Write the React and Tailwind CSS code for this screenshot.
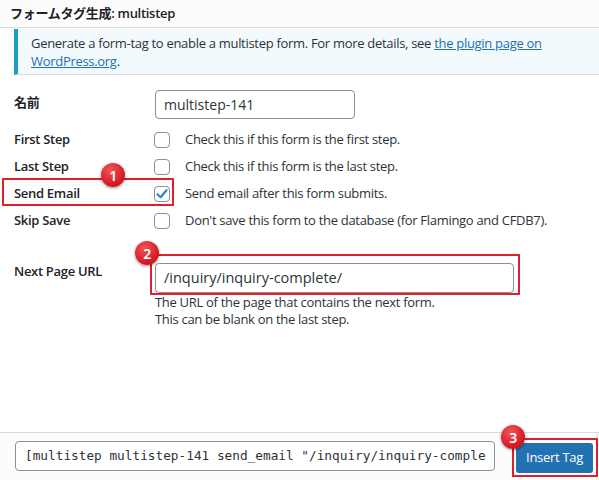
import React from "react";

function Badge({ n, className }) {
  return (
    <div
      className={`absolute w-[24px] h-[24px] rounded-full flex items-center justify-center text-white text-[14px] font-semibold shadow-[0_1px_3px_rgba(0,0,0,0.45)] bg-[radial-gradient(circle_at_40%_30%,#f0545a,#d3161f_70%)] ${className}`}
      style={{ fontFamily: '"Noto Sans", sans-serif' }}
    >
      {n}
    </div>
  );
}

function Box({ checked }) {
  return (
    <div className="w-[16px] h-[16px] rounded-[4px] border border-[#8c8f94] bg-white flex items-center justify-center shrink-0">
      {checked && (
        <svg width="14" height="14" viewBox="0 0 14 14">
          <path d="M2.5 7.2 L5.6 10.2 L11.5 3.2" fill="none" stroke="#3582c4" strokeWidth="2.2" strokeLinecap="round" strokeLinejoin="round" />
        </svg>
      )}
    </div>
  );
}

function CheckRow({ label, desc, checked }) {
  return (
    <div className="flex items-center h-[27px]">
      <div className="w-[154px] pl-[14px] text-[13px] font-semibold text-[#1d2327]">{label}</div>
      <Box checked={checked} />
      <div className="pl-[15px] text-[13px] text-[#2c3338]">{desc}</div>
    </div>
  );
}

export default function App() {
  return (
    <div
      className="relative w-[599px] h-[480px] bg-white overflow-hidden text-[#1d2327] tracking-[-0.3px]"
      style={{ fontFamily: '"Open Sans", "Noto Sans CJK JP", sans-serif' }}
    >
      <div className="h-[28px] bg-[#fcfcfc] border-b border-[#dcdcde] flex items-center pl-[10px] text-[13px] font-semibold">
        フォームタグ生成: multistep
      </div>
      <div className="ml-[14px] mt-[1px] h-[46px] border-l-4 border-[#1e9fbf] bg-[#f3fafd] border-b border-b-[#dcdcde] pl-[13px] pt-[5px] text-[13px] leading-[18px] text-[#2c3338]">
        Generate a form-tag to enable a multistep form. For more details, see{" "}
        <span className="text-[#2271b1] underline">the plugin page on</span>
        <br />
        <span className="text-[#2271b1] underline">WordPress.org</span>.
      </div>

      <div className="flex items-start mt-[15px]">
        <div className="w-[155px] pl-[14px] pt-[3px] text-[13px] font-semibold">名前</div>
        <div className="w-[200px] h-[29px] rounded-[4px] border border-[#8c8f94] flex items-center pl-[8px] text-[14px] tracking-normal text-[#2c3338]">
          multistep-141
        </div>
      </div>

      <div className="mt-[7px] flex flex-col">
        <CheckRow label="First Step" desc="Check this if this form is the first step." />
        <CheckRow label="Last Step" desc="Check this if this form is the last step." />
        <CheckRow label="Send Email" desc="Send email after this form submits." checked />
        <CheckRow label="Skip Save" desc="Don't save this form to the database (for Flamingo and CFDB7)." />
      </div>

      <div className="flex items-start mt-[29px]">
        <div className="w-[155px] pl-[14px] -mt-[1px] text-[13px] leading-[18px] font-semibold">Next Page URL</div>
        <div className="flex flex-col">
          <div className="w-[359px] h-[30px] rounded-[4px] border border-[#8c8f94] flex items-center pl-[8px] text-[14.5px] tracking-normal text-[#2c3338]">
            /inquiry/inquiry-complete/
          </div>
          <div className="text-[13px] leading-[17px] text-[#2c3338] mt-[1px]">
            The URL of the page that contains the next form.
            <br />
            This can be blank on the last step.
          </div>
        </div>
      </div>

      <div className="absolute left-0 right-0 top-[432px] bottom-0 border-t border-[#dcdcde] bg-[#fcfcfc] flex items-start">
        <div
          className="ml-[15px] mt-[8px] w-[480px] h-[30px] rounded-[4px] border border-[#8c8f94] bg-white flex items-center pl-[9px] text-[12.75px] tracking-normal text-[#2c3338] overflow-hidden whitespace-nowrap"
          style={{ fontFamily: '"DejaVu Sans Mono", monospace' }}
        >
          [multistep multistep-141 send_email "/inquiry/inquiry-comple
        </div>
        <div className="ml-[21px] mt-[10px] w-[77px] h-[30px] rounded-[3px] bg-[#2271b1] text-white text-[13px] flex items-center justify-center">
          Insert Tag
        </div>
      </div>

      {/* annotations */}
      <div className="absolute left-[2px] top-[178px] w-[172px] h-[28px] border-2 border-[#e0202a]" />
      <div className="absolute left-[150px] top-[254px] w-[370px] h-[41px] border-2 border-[#e0202a]" />
      <div className="absolute left-[512px] top-[438px] w-[86px] h-[39px] border-2 border-[#e0202a]" />
      <Badge n="1" className="left-[101px] top-[163px]" />
      <Badge n="2" className="left-[135px] top-[241px]" />
      <Badge n="3" className="left-[501px] top-[425px]" />
    </div>
  );
}
